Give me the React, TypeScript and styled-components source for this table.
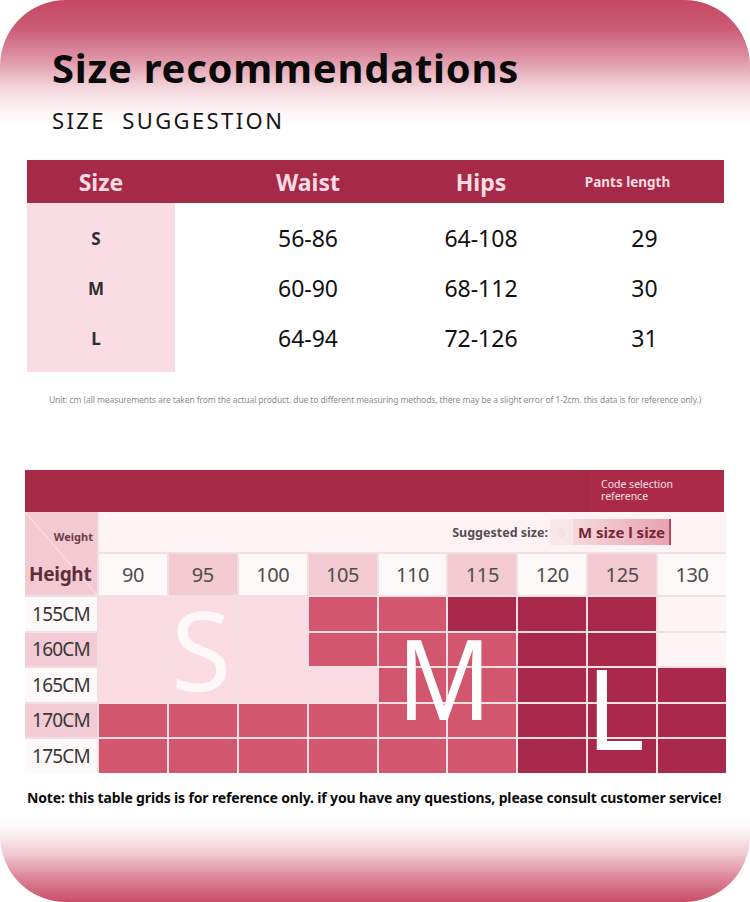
import React from 'react';
import styled, { createGlobalStyle } from 'styled-components';

const GlobalStyle = createGlobalStyle`
  html, body {
    margin: 0;
    padding: 0;
    background: #ffffff;
  }
  body {
    font-family: "Noto Sans", "Open Sans", sans-serif;
  }
`;

type Tone = 'L' | 'M' | 'D' | 'V';

const weights = ['90', '95', '100', '105', '110', '115', '120', '125', '130'];

const chart: { label: string; cells: Tone[] }[] = [
  { label: '155CM', cells: ['L', 'L', 'L', 'M', 'M', 'D', 'D', 'D', 'V'] },
  { label: '160CM', cells: ['L', 'L', 'L', 'M', 'M', 'M', 'D', 'D', 'V'] },
  { label: '165CM', cells: ['L', 'L', 'L', 'L', 'M', 'M', 'D', 'D', 'D'] },
  { label: '170CM', cells: ['M', 'M', 'M', 'M', 'M', 'M', 'D', 'D', 'D'] },
  { label: '175CM', cells: ['M', 'M', 'M', 'M', 'M', 'M', 'D', 'D', 'D'] },
];

const sizes = [
  { size: 'S', waist: '56-86', hips: '64-108', length: '29' },
  { size: 'M', waist: '60-90', hips: '68-112', length: '30' },
  { size: 'L', waist: '64-94', hips: '72-126', length: '31' },
];

const toneColor: Record<Tone, string> = {
  L: '#fadbe2',
  M: '#d3566f',
  D: '#a9294a',
  V: '#fdf4f5',
};

const App = () => {
  return (
    <>
      <GlobalStyle />
      <Page>
        <Title>Size recommendations</Title>
        <Subtitle>SIZE&nbsp; SUGGESTION</Subtitle>

        <SizeTable>
          <HeadRow>
            <HeadCell $size={23}>Size</HeadCell>
            <HeadCell $size={23}>Waist</HeadCell>
            <HeadCell $size={23}>Hips</HeadCell>
            <HeadCell $size={13.5} $shift={10}>Pants length</HeadCell>
          </HeadRow>
          <BodyRows>
            {sizes.map((s) => (
              <BodyRow key={s.size}>
                <SizeName>{s.size}</SizeName>
                <Value>{s.waist}</Value>
                <Value>{s.hips}</Value>
                <Value $shift={44}>{s.length}</Value>
              </BodyRow>
            ))}
          </BodyRows>
        </SizeTable>

        <UnitNote>
          Unit: cm (all measurements are taken from the actual product. due to different measuring methods, there may be a slight error of 1-2cm. this data is for reference only.)
        </UnitNote>

        <Chart>
          <ChartHead>
            <CodeBox>
              <CodeLine>Code selection</CodeLine>
              <CodeLine>reference</CodeLine>
            </CodeBox>
          </ChartHead>
          <ChartGrid>
            <Corner>
              <CornerWeight>Weight</CornerWeight>
              <CornerHeight>Height</CornerHeight>
            </Corner>
            <SuggestBar>
              <SuggestLabel>Suggested size:</SuggestLabel>
              <FadedTag>S</FadedTag>
              <SizeTag>M size l size</SizeTag>
            </SuggestBar>
            {weights.map((w, i) => (
              <WeightCell key={w} $pink={i % 2 === 1}>
                {w}
              </WeightCell>
            ))}
            {chart.map((row, r) => (
              <React.Fragment key={row.label}>
                <HeightCell $pink={r % 2 === 1}>{row.label}</HeightCell>
                {row.cells.map((t, c) => (
                  <ToneCell key={c} $tone={t} />
                ))}
              </React.Fragment>
            ))}
          </ChartGrid>
          <BigLetter $left={146} $top={134} $size={110} $fade>
            S
          </BigLetter>
          <BigLetter $left={372} $top={162} $size={112} $scale={0.93}>
            M
          </BigLetter>
          <BigLetter $left={561} $top={192} $size={112}>
            L
          </BigLetter>
        </Chart>

        <BottomNote>
          Note: this table grids is for reference only. if you have any questions, please consult customer service!
        </BottomNote>
      </Page>
    </>
  );
};

const Page = styled.div`
  width: 750px;
  height: 902px;
  box-sizing: border-box;
  padding-top: 48px;
  border-radius: 66px;
  overflow: hidden;
  position: relative;
  background: linear-gradient(
    to bottom,
    #c54864 0px,
    #cc5d77 30px,
    #df97a8 60px,
    #f4d6dd 88px,
    #fdf6f7 112px,
    #ffffff 128px,
    #ffffff 818px,
    #fbeef1 835px,
    #f0c6cf 855px,
    #dc8597 878px,
    #c94d68 902px
  );
`;

const Title = styled.h1`
  margin: 0 0 0 52px;
  font-size: 40px;
  line-height: 40px;
  font-weight: 700;
  letter-spacing: 0.75px;
  color: #0a0a0a;
`;

const Subtitle = styled.h2`
  margin: 21px 0 0 52px;
  font-size: 22px;
  line-height: 22px;
  font-weight: 400;
  letter-spacing: 2.4px;
  color: #151515;
`;

const SizeTable = styled.div`
  margin: 29px 26px 0 27px;
`;

const columns = `148px 266px 80px 1fr`;

const HeadRow = styled.div`
  display: grid;
  grid-template-columns: ${columns};
  height: 43px;
  align-items: center;
  background: #a62a48;
`;

const HeadCell = styled.div<{ $size: number; $shift?: number }>`
  text-align: center;
  padding-left: ${(p) => p.$shift ?? 0}px;
  font-size: ${(p) => p.$size}px;
  font-weight: 700;
  color: #fcdbe3;
`;

const BodyRows = styled.div`
  padding: 10px 0 9px;
  background: linear-gradient(to right, #fadde4 148px, #ffffff 148px);
`;

const BodyRow = styled.div`
  display: grid;
  grid-template-columns: ${columns};
  height: 50px;
  align-items: center;
`;

const SizeName = styled.div`
  text-align: center;
  padding-right: 10px;
  font-size: 17px;
  font-weight: 700;
  color: #2e2e2e;
`;

const Value = styled.div<{ $shift?: number }>`
  text-align: center;
  padding-left: ${(p) => p.$shift ?? 0}px;
  font-size: 23px;
  color: #111;
`;

const UnitNote = styled.p`
  margin: 22px 0 0 49px;
  font-size: 8.5px;
  line-height: 12px;
  letter-spacing: -0.1px;
  color: #8c8c8c;
  white-space: nowrap;
`;

const Chart = styled.div`
  position: relative;
  margin: 64px 24px 0 25px;
`;

const ChartHead = styled.div`
  height: 42px;
  display: flex;
  justify-content: flex-end;
  background: #a62a48;
  margin-right: 2px;
`;

const CodeBox = styled.div`
  width: 123px;
  padding: 9px 0 0 11px;
  display: flex;
  flex-direction: column;
  background: #ab2a49;
`;

const CodeLine = styled.span`
  font-size: 10.5px;
  line-height: 11.5px;
  color: #f7e0e6;
`;

const ChartGrid = styled.div`
  display: grid;
  grid-template-columns: 72px repeat(9, 1fr);
  grid-template-rows: 40px 41px repeat(5, 33.5px);
  gap: 2px;
  background: #f1dfe3;
`;

const Corner = styled.div`
  grid-row: 1 / span 2;
  display: flex;
  flex-direction: column;
  justify-content: space-between;
  padding: 17px 4px 8px 4px;
  background: linear-gradient(
    to top right,
    #f3c9d2 calc(50% - 1px),
    #f9e2e7 50%,
    #f3c9d2 calc(50% + 1px)
  );
`;

const CornerWeight = styled.span`
  align-self: flex-end;
  font-size: 11px;
  font-weight: 700;
  color: #6b3b47;
`;

const CornerHeight = styled.span`
  font-size: 19px;
  font-weight: 700;
  color: #5e2e3a;
  letter-spacing: -0.3px;
`;

const SuggestBar = styled.div`
  grid-column: 2 / -1;
  display: flex;
  align-items: center;
  justify-content: flex-end;
  padding-right: 55px;
  background: #fdf3f4;
`;

const SuggestLabel = styled.span`
  font-size: 12.5px;
  font-weight: 700;
  color: #5b4c51;
  margin-right: 2px;
`;

const FadedTag = styled.span`
  width: 23px;
  height: 26px;
  display: flex;
  align-items: center;
  justify-content: center;
  background: #f7e6ea;
  font-size: 13px;
  font-weight: 700;
  color: #f1dde2;
`;

const SizeTag = styled.span`
  height: 26px;
  display: flex;
  align-items: center;
  padding: 0 4px 0 5px;
  background: linear-gradient(to right, #f6dade, #e7a3af);
  border-right: 2px solid #b9495f;
  font-size: 15px;
  font-weight: 700;
  color: #7a2636;
`;

const WeightCell = styled.div<{ $pink: boolean }>`
  display: flex;
  align-items: center;
  justify-content: center;
  background: ${(p) => (p.$pink ? '#f3c9d2' : '#fdf8f8')};
  font-size: 20px;
  letter-spacing: -0.4px;
  color: #4d4d4d;
`;

const HeightCell = styled.div<{ $pink: boolean }>`
  display: flex;
  align-items: center;
  justify-content: center;
  background: ${(p) => (p.$pink ? '#f2cbd4' : '#fefafa')};
  font-size: 19px;
  letter-spacing: -0.8px;
  color: #383838;
`;

const ToneCell = styled.div<{ $tone: Tone }>`
  background: ${(p) => toneColor[p.$tone]};
`;

const BigLetter = styled.span<{ $left: number; $top: number; $size: number; $scale?: number; $fade?: boolean }>`
  position: absolute;
  left: ${(p) => p.$left}px;
  top: ${(p) => p.$top}px;
  font-size: ${(p) => p.$size}px;
  line-height: 0.8;
  font-weight: 400;
  color: ${(p) => (p.$fade ? 'rgba(255, 255, 255, 0.8)' : '#ffffff')};
  transform: scaleX(${(p) => p.$scale ?? 1});
  transform-origin: left top;
  pointer-events: none;
`;

const BottomNote = styled.p`
  margin: 16px 0 0 27px;
  font-size: 14px;
  line-height: 18px;
  font-weight: 700;
  letter-spacing: -0.15px;
  color: #0b0b0b;
  white-space: nowrap;
`;

export default App;
